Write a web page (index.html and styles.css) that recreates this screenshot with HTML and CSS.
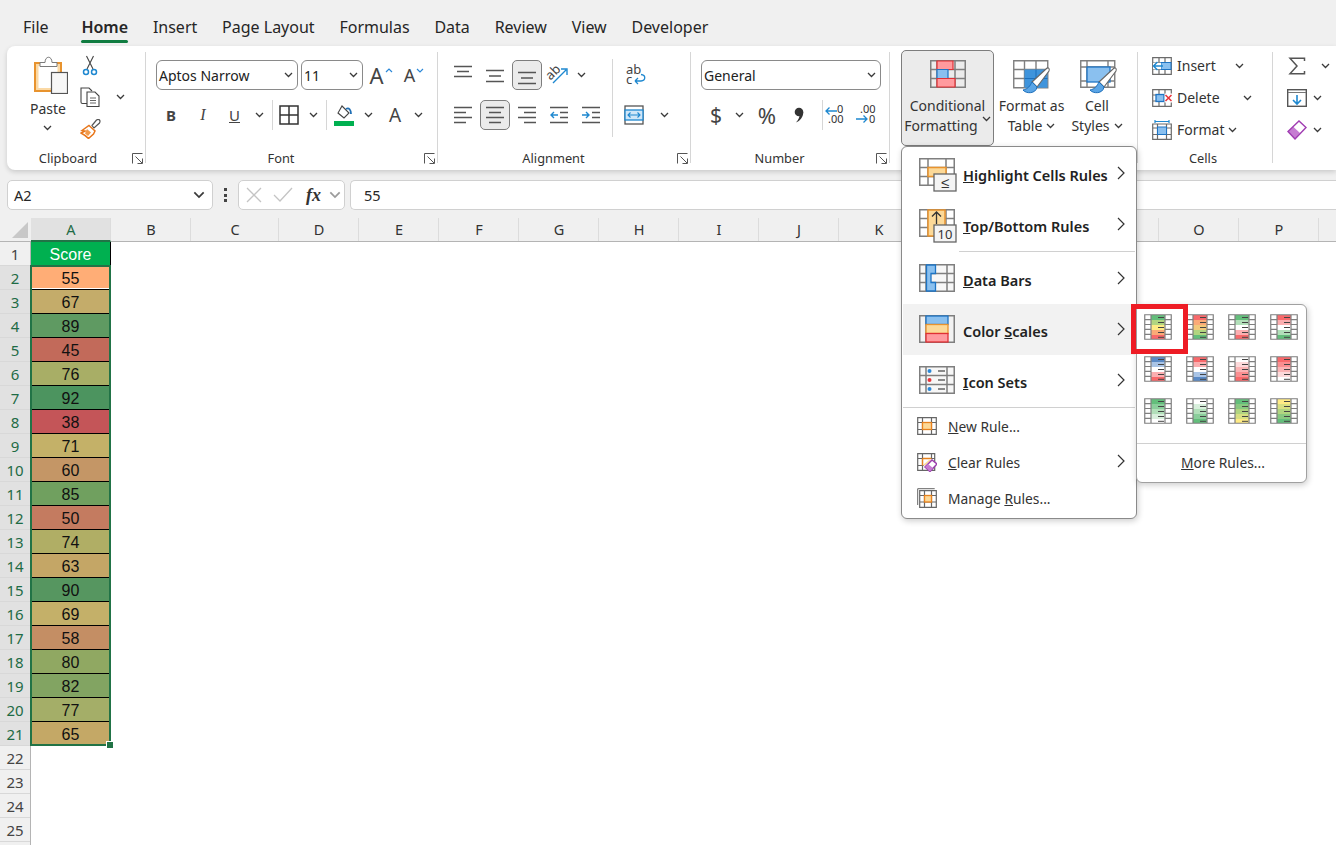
FILE: index.html
```html
<!DOCTYPE html>
<html lang="en">
<head>
<meta charset="utf-8">
<title>Excel - Color Scales</title>
<link rel="stylesheet" href="styles.css">
</head>
<body>
<svg class="defs" width="0" height="0">
  <symbol id="chev" viewBox="0 0 9 6"><path d="M1 1l3.5 3.5L8 1" fill="none" stroke="#3a3a3a" stroke-width="1.3"/></symbol>
  <symbol id="launch" viewBox="0 0 11 11"><path d="M.5 10.5V.5h10M3.5 3.5l6.5 6.5M10.5 5.5v5h-5" fill="none" stroke="#555" stroke-width="1"/></symbol>
  <symbol id="right" viewBox="0 0 8 14"><path d="M1 1l6 6-6 6" fill="none" stroke="#333" stroke-width="1.2"/></symbol>
  <symbol id="csgrid" viewBox="0 0 28 26"><path d="M.75.75h26.500v24.500H.75zM7 .75v24.500M21 .75v24.500M.75 5.600H7M21 5.600h6.250M.75 10.500H7M21 10.500h6.250M.75 15.400H7M21 15.400h6.250M.75 20.300H7M21 20.300h6.250" fill="none" stroke="#7f7f7f" stroke-width="1.200"/><path d="M14 3.500h6M14 8.500h6M14 13.500h6M14 18.500h6M14 23.300h6" stroke="#444" stroke-width="1"/></symbol>
</svg>
<div class="app">
  <nav class="tabs">
    <span class="tab file">File</span><span class="tab active">Home</span><span class="tab">Insert</span><span class="tab">Page Layout</span><span class="tab">Formulas</span><span class="tab">Data</span><span class="tab">Review</span><span class="tab">View</span><span class="tab">Developer</span>
  </nav>

  <section class="ribbon">
    <div class="group g-clip">
      <div class="body clip-body">
        <div class="paste">
          <svg width="34" height="38" viewBox="0 0 34 38"><rect x="1" y="7" width="26" height="28" fill="#fbd9a5" stroke="#e8932e" stroke-width="2"/><rect x="4.500" y="10" width="19" height="22" fill="#fff"/><path d="M6 10.500V6.500h5c0-7 7-7 7 0h5v4z" fill="#fff" stroke="#7a7a7a"/><rect x="17.500" y="16.500" width="16" height="21" fill="#f7f7f7" stroke="#555" stroke-width="1.200"/></svg>
          <span class="t paste-t">Paste</span>
          <svg class="chev chev-p"><use href="#chev"/></svg>
        </div>
        <div class="clip-small">
          <div class="cs-row"><svg width="16" height="21" viewBox="0 0 16 21"><path d="M4.500 1l6.500 13M11.500 1L5 14" stroke="#444" fill="none" stroke-width="1.100"/><circle cx="4" cy="17" r="2.500" fill="none" stroke="#1e88d0" stroke-width="1.500"/><circle cx="12" cy="17" r="2.500" fill="none" stroke="#1e88d0" stroke-width="1.500"/></svg></div>
          <div class="cs-row"><svg width="20" height="20" viewBox="0 0 20 20"><path d="M7 16.500H2.500q-1.500 0-1.500-1.500V1h8l3 3" fill="#fff" stroke="#444" stroke-width="1.100"/><path d="M7 5h8l4 4v10.500H7z" fill="#fff" stroke="#444" stroke-width="1.100"/><path d="M10 11h6M10 13.500h6M10 16h6" stroke="#666"/></svg><svg class="chev chev-c"><use href="#chev"/></svg></div>
          <div class="cs-row"><svg width="21" height="20" viewBox="0 0 21 20"><path d="M12 6.500l4.500-5.500q2-1.200 3 0t0 3L14 9z" fill="#fff" stroke="#555" stroke-width="1.200"/><path d="M9 6.500l6 5.500-1.500 3-5 4.500C6 17 3 15 1 14l4-2-3-.5z" fill="#fff" stroke="#e8761a" stroke-width="1.500"/><path d="M7 10l4 3.500-3 3.500-3-2.500z" fill="#f39a4a"/></svg></div>
        </div>
      </div>
      <footer class="foot has-launch"><span></span><span>Clipboard</span><svg class="launch"><use href="#launch"/></svg></footer>
    </div>
    <i class="vsep"></i>

    <div class="group g-font">
      <div class="body stack">
        <div class="row">
          <div class="combo w142"><span>Aptos Narrow</span><svg class="chev"><use href="#chev"/></svg></div>
          <div class="combo w62 ml3"><span>11</span><svg class="chev"><use href="#chev"/></svg></div>
          <div class="tb w36"><span class="bigA">A</span><svg class="caret" width="8" height="5" viewBox="0 0 8 5"><path d="M1 4l3-3 3 3" fill="none" stroke="#2b88d8" stroke-width="1.2"/></svg></div>
          <div class="tb w30"><span class="midA">A</span><svg class="caret" width="8" height="5" viewBox="0 0 8 5"><path d="M1 1l3 3 3-3" fill="none" stroke="#2b88d8" stroke-width="1.2"/></svg></div>
        </div>
        <div class="row">
          <div class="tb w30"><b class="fB">B</b></div>
          <div class="tb w30 ml2"><i class="fI">I</i></div>
          <div class="tb w31 ml1"><u class="fU">U</u></div>
          <div class="tb w18"><svg class="chev"><use href="#chev"/></svg></div>
          <i class="rs w8"></i>
          <div class="tb w26"><svg width="20" height="20" viewBox="0 0 20 20"><path d="M1 1h18v18H1zM10 1v18M1 10h18" fill="none" stroke="#333" stroke-width="1.500"/></svg></div>
          <div class="tb w22"><svg class="chev"><use href="#chev"/></svg></div>
          <i class="rs w4"></i>
          <div class="tb w32"><svg width="20" height="21" viewBox="0 0 20 21"><path d="M8 1l7 7-5 5-6-5z" fill="#fff" stroke="#444" stroke-width="1.100"/><path d="M12 4c3-2 5 1 5 5" fill="none" stroke="#1f6fb5" stroke-width="1.800"/><rect y="16" width="20" height="5" fill="#00b050"/></svg></div>
          <div class="tb w17"><svg class="chev"><use href="#chev"/></svg></div>
          <div class="tb w36"><span class="colA">A</span></div>
          <div class="tb w10"><svg class="chev"><use href="#chev"/></svg></div>
        </div>
      </div>
      <footer class="foot has-launch"><span></span><span>Font</span><svg class="launch"><use href="#launch"/></svg></footer>
    </div>
    <i class="vsep"></i>

    <div class="group g-align">
      <div class="body align-body">
        <div class="stack w164">
          <div class="row g2">
            <div class="tb w30"><svg width="18" height="22" viewBox="0 0 18 22"><path d="M0 2.500h18M3 7.500h12M0 12.500h18" stroke="#555" stroke-width="1.300"/></svg></div>
            <div class="tb w30"><svg width="18" height="22" viewBox="0 0 18 22"><path d="M0 6.500h18M3 12h12M0 17.500h18" stroke="#555" stroke-width="1.300"/></svg></div>
            <div class="tb w30 on"><svg width="18" height="22" viewBox="0 0 18 22"><path d="M0 8.500h18M3 14h12M0 19.500h18" stroke="#555" stroke-width="1.300"/></svg></div>
            <div class="tb w28"><svg class="vis" width="22" height="20" viewBox="0 0 22 20"><text x="0" y="13" class="svgt" transform="rotate(-45 5 10)">ab</text><path d="M6 18L19 5M14 4h6v6" fill="none" stroke="#1e88d0" stroke-width="1.400"/></svg></div>
            <div class="tb w14"><svg class="chev"><use href="#chev"/></svg></div>
          </div>
          <div class="row g2">
            <div class="tb w30"><svg width="18" height="18" viewBox="0 0 18 18"><path d="M0 1.500h18M0 6.500h12M0 11.500h18M0 16.500h12" stroke="#555" stroke-width="1.300"/></svg></div>
            <div class="tb w30 on"><svg width="18" height="18" viewBox="0 0 18 18"><path d="M0 1.500h18M3 6.500h12M0 11.500h18M3 16.500h12" stroke="#555" stroke-width="1.300"/></svg></div>
            <div class="tb w30"><svg width="18" height="18" viewBox="0 0 18 18"><path d="M0 1.500h18M6 6.500h12M0 11.500h18M6 16.500h12" stroke="#555" stroke-width="1.300"/></svg></div>
            <div class="tb w30"><svg width="18" height="18" viewBox="0 0 18 18"><path d="M0 1.500h18M10 6.500h8M10 11.500h8M0 16.500h18" stroke="#555" stroke-width="1.300"/><path d="M8 9H1M4 6L1 9l3 3" fill="none" stroke="#1e88d0" stroke-width="1.400"/></svg></div>
            <div class="tb w30"><svg width="18" height="18" viewBox="0 0 18 18"><path d="M0 1.500h18M10 6.500h8M10 11.500h8M0 16.500h18" stroke="#555" stroke-width="1.300"/><path d="M0 9h7M4 6l3 3-3 3" fill="none" stroke="#1e88d0" stroke-width="1.400"/></svg></div>
          </div>
        </div>
        <i class="rs-tall"></i>
        <div class="stack">
          <div class="row"><div class="tb w46"><svg class="vis" width="20" height="20" viewBox="0 0 20 20"><text x="0" y="9" class="svgt">ab</text><text x="0" y="19" class="svgt">c</text><path d="M9 16h6c5-.5 5-6 0-6.500M9 16l3-3M9 16l3 3" fill="none" stroke="#1e88d0" stroke-width="1.300"/></svg></div></div>
          <div class="row"><div class="tb w42"><svg width="20" height="20" viewBox="0 0 20 20"><rect x="1" y="1" width="18" height="18" fill="#fff" stroke="#555" stroke-width="1.300"/><rect x="1" y="5" width="18" height="10" fill="#cfe6f8" stroke="#1e88d0" stroke-width="1.300"/><path d="M4 10h12M6.500 7.500L4 10l2.500 2.500M13.500 7.500L16 10l-2.500 2.500" fill="none" stroke="#1e88d0" stroke-width="1.100"/></svg></div><div class="tb w18"><svg class="chev"><use href="#chev"/></svg></div></div>
        </div>
      </div>
      <footer class="foot has-launch"><span></span><span>Alignment</span><svg class="launch"><use href="#launch"/></svg></footer>
    </div>
    <i class="vsep"></i>

    <div class="group g-num">
      <div class="body stack">
        <div class="row"><div class="combo w180"><span>General</span><svg class="chev"><use href="#chev"/></svg></div></div>
        <div class="row">
          <div class="tb w30"><span class="nsym">$</span></div>
          <div class="tb w16"><svg class="chev"><use href="#chev"/></svg></div>
          <div class="tb w40"><span class="nsym pct">%</span></div>
          <div class="tb w24"><svg width="10" height="16" viewBox="0 0 10 16"><circle cx="5" cy="5" r="4.300" fill="#333"/><path d="M9.200 5C9.500 10 6 14 2 15.500 5 12 5.500 10 5.500 8z" fill="#333"/></svg></div>
          <i class="rs w12"></i>
          <div class="tb w23"><svg class="vis" width="20" height="20" viewBox="0 0 20 20"><text x="12" y="8" class="dec">0</text><text x="3" y="18" class="dec">.00</text><path d="M12 6H1M4.500 2.500L1 6l3.500 3.500" fill="none" stroke="#1e88d0" stroke-width="1.300"/></svg></div>
          <div class="tb w40"><svg class="vis" width="20" height="20" viewBox="0 0 20 20"><text x="4" y="8" class="dec">.00</text><text x="13" y="18" class="dec">0</text><path d="M0 14h11M7.500 10.500L11 14l-3.500 3.500" fill="none" stroke="#1e88d0" stroke-width="1.300"/></svg></div>
        </div>
      </div>
      <footer class="foot has-launch"><span></span><span>Number</span><svg class="launch"><use href="#launch"/></svg></footer>
    </div>
    <i class="vsep"></i>

    <div class="group g-styles">
      <div class="body big-body">
        <div class="bigbtn cf">
          <svg width="36" height="28" viewBox="0 0 36 28"><path d="M.75.75h34.500v26.500H.75zM7 .75v26.500M25 .75v26.500M.75 9.500h34.500M.75 18.500h34.500" fill="none" stroke="#7f7f7f" stroke-width="1.500"/><path d="M7 1h16v8.500H7z" fill="#ff9a9e" stroke="#e03035" stroke-width="1.200"/><path d="M7 9.500h11v9H7z" fill="#8ac0ef" stroke="#1e74c4" stroke-width="1.200"/><path d="M7 18.500h18v8.500H7z" fill="#ff9a9e" stroke="#e03035" stroke-width="1.200"/></svg>
          <span class="t bt">Conditional</span>
          <span class="t bt">Formatting<svg class="chev chev-i"><use href="#chev"/></svg></span>
        </div>
        <div class="bigbtn ft">
          <svg width="38" height="35" viewBox="0 0 38 35"><path d="M.75.75h34v27h-34zM11.500 .75v27M23 .75v27M.75 9.500h34M.75 18.500h34" fill="none" stroke="#7f7f7f" stroke-width="1.400"/><path d="M11.500 9.500h23v18.250h-23z" fill="#3f94dc"/><path d="M23 9.500v18M11.500 18.500h23" stroke="#1d6fbb"/><path d="M19 22L33 9c2-2 4-1 3 2L24 27z" fill="#fff" stroke="#666" stroke-width="1.100"/><path d="M19 22c-2 4-4 7-9 8 3 4 13 4 14-3z" fill="#5aa5e6" stroke="#1d6fbb"/></svg>
          <span class="t bt">Format as</span>
          <span class="t bt">Table<svg class="chev chev-i"><use href="#chev"/></svg></span>
        </div>
        <div class="bigbtn cst">
          <svg width="38" height="35" viewBox="0 0 38 35"><path d="M.75.75h34v26.500h-34zM7 .75v26.500M28 .75v26.500M.75 7h34M.75 21h34" fill="none" stroke="#7f7f7f" stroke-width="1.400"/><rect x="7" y="7" width="23" height="15" fill="#8ac0ef" stroke="#1e74c4" stroke-width="1.300"/><path d="M19 22L33 9c2-2 4-1 3 2L24 27z" fill="#fff" stroke="#666" stroke-width="1.100"/><path d="M19 22c-2 4-4 7-9 8 3 4 13 4 14-3z" fill="#5aa5e6" stroke="#1d6fbb"/></svg>
          <span class="t bt">Cell</span>
          <span class="t bt">Styles<svg class="chev chev-i"><use href="#chev"/></svg></span>
        </div>
      </div>
      <footer class="foot"><span></span><span></span><span></span></footer>
    </div>
    <i class="vsep"></i>

    <div class="group g-cells">
      <div class="body tri">
        <div class="tri-row"><svg width="20" height="18" viewBox="0 0 20 18"><path d="M.7.7h18.600v16.600H.7zM.7 6h18.600M.7 12h18.600M7 .7v16.600M13 .7v16.600" fill="none" stroke="#6b6b6b" stroke-width="1.200"/><rect x="9" y="5.500" width="10" height="7" fill="#8ac0ef" stroke="#1e74c4"/><rect x="1" y="6" width="8" height="6" fill="#fff"/><path d="M11 9H2M5.500 5L1.500 9l4 4" fill="none" stroke="#1e88d0" stroke-width="1.500"/></svg><span class="t w58">Insert</span><svg class="chev"><use href="#chev"/></svg></div>
        <div class="tri-row"><svg width="20" height="18" viewBox="0 0 20 18"><path d="M.7.7h18.600v16.600H.7zM.7 6h18.600M.7 12h18.600M7 .7v16.600M13 .7v16.600" fill="none" stroke="#6b6b6b" stroke-width="1.200"/><rect x="4" y="5.500" width="8" height="7" fill="#8ac0ef" stroke="#1e74c4" stroke-width="1.300"/><rect x="12.500" y="4.500" width="7.500" height="9" fill="#fff"/><path d="M13.500 6l6 6M19.500 6l-6 6" stroke="#e8333a" stroke-width="1.500"/></svg><span class="t w66">Delete</span><svg class="chev"><use href="#chev"/></svg></div>
        <div class="tri-row"><svg width="20" height="20" viewBox="0 0 20 20"><path d="M.7 4h18.600v15.300H.7zM.7 8h18.600M.7 14.500h18.600M5.500 4v15.300M14.500 4v15.300" fill="none" stroke="#6b6b6b" stroke-width="1.200"/><rect x="5.500" y="7" width="9" height="7.500" fill="#8ac0ef" stroke="#1e74c4"/><path d="M3 1.500h14M3 0v3M17 0v3" stroke="#1e88d0" stroke-width="1.200"/></svg><span class="t w51">Format</span><svg class="chev"><use href="#chev"/></svg></div>
      </div>
      <footer class="foot"><span></span><span>Cells</span><span></span></footer>
    </div>
    <i class="vsep"></i>

    <div class="group g-edit">
      <div class="body tri">
        <div class="tri-row"><svg class="ed sigma" width="20" height="18" viewBox="-2 0 20 18"><path d="M15.500 4V1.200H1l7 7.800-7 7.800h14.500V14" fill="none" stroke="#555" stroke-width="1.500"/></svg><svg class="chev"><use href="#chev"/></svg></div>
        <div class="tri-row"><svg class="ed" width="20" height="18" viewBox="0 0 20 18"><rect x=".7" y=".7" width="18.600" height="16.600" fill="#fff" stroke="#555" stroke-width="1.400"/><path d="M1 3.500h18" stroke="#777"/><path d="M10 6v9M6 11l4 4 4-4" fill="none" stroke="#1e88d0" stroke-width="1.600"/></svg><svg class="chev"><use href="#chev"/></svg></div>
        <div class="tri-row"><svg class="ed" width="20" height="20" viewBox="0 0 20 20"><path d="M1 11.500L12 1l7 6.500L8 19z" fill="#fff"/><path d="M1 11.500l5-5 7 6.500-5 6z" fill="#c67cd2"/><path d="M1 11.500L12 1l7 6.500L8 19z" fill="none" stroke="#a03cb2" stroke-width="1.400"/></svg><svg class="chev"><use href="#chev"/></svg></div>
      </div>
      <footer class="foot"><span></span><span></span><span></span></footer>
    </div>
  </section>

  <section class="fbar">
    <div class="namebox"><span>A2</span><svg class="chev chev-w"><use href="#chev"/></svg></div>
    <div class="dots"><i></i><i></i><i></i></div>
    <div class="fxbox">
      <svg width="16" height="16" viewBox="0 0 16 16"><path d="M1 1l14 14M15 1L1 15" stroke="#c4c4c4" stroke-width="1.300"/></svg>
      <svg width="20" height="16" viewBox="0 0 20 16"><path d="M1 8l6 6L19 1" fill="none" stroke="#c4c4c4" stroke-width="1.300"/></svg>
      <span class="fx">fx</span>
      <svg class="chev chev-l"><use href="#chev"/></svg>
    </div>
    <div class="formula">55</div>
  </section>

  <section class="sheet">
    <div class="colhdr">
      <div class="corner"><svg width="16" height="16" viewBox="0 0 16 16"><path d="M16 0v16H0z" fill="#c8c8c8"/></svg></div>
      <div class="ch sel">A</div><div class="ch">B</div><div class="ch wide">C</div><div class="ch">D</div><div class="ch">E</div><div class="ch">F</div><div class="ch">G</div><div class="ch">H</div><div class="ch">I</div><div class="ch">J</div><div class="ch">K</div><div class="ch">L</div><div class="ch">M</div><div class="ch">N</div><div class="ch">O</div><div class="ch">P</div><div class="ch">Q</div>
    </div>
    <div class="gridwrap">
      <div class="rowhdr">
        <div class="rh">1</div><div class="rh sel">2</div><div class="rh sel">3</div><div class="rh sel">4</div><div class="rh sel">5</div><div class="rh sel">6</div><div class="rh sel">7</div><div class="rh sel">8</div><div class="rh sel">9</div><div class="rh sel">10</div><div class="rh sel">11</div><div class="rh sel">12</div><div class="rh sel">13</div><div class="rh sel">14</div><div class="rh sel">15</div><div class="rh sel">16</div><div class="rh sel">17</div><div class="rh sel">18</div><div class="rh sel">19</div><div class="rh sel">20</div><div class="rh sel">21</div><div class="rh">22</div><div class="rh">23</div><div class="rh">24</div><div class="rh">25</div><div class="rh">26</div>
      </div>
      <div class="cola">
        <div class="cell head">Score</div>
        <div class="cell active" style="background:#ffad76">55</div>
        <div class="cell" style="background:#c4ac6a">67</div>
        <div class="cell" style="background:#5f9a62">89</div>
        <div class="cell" style="background:#c26a5a">45</div>
        <div class="cell" style="background:#a8ae66">76</div>
        <div class="cell" style="background:#4c945f">92</div>
        <div class="cell" style="background:#c45558">38</div>
        <div class="cell" style="background:#c4b168">71</div>
        <div class="cell" style="background:#c49666">60</div>
        <div class="cell" style="background:#70a05f">85</div>
        <div class="cell" style="background:#c47b60">50</div>
        <div class="cell" style="background:#b0ae65">74</div>
        <div class="cell" style="background:#c4a666">63</div>
        <div class="cell" style="background:#569660">90</div>
        <div class="cell" style="background:#c4b069">69</div>
        <div class="cell" style="background:#c48e64">58</div>
        <div class="cell" style="background:#90a862">80</div>
        <div class="cell" style="background:#82a462">82</div>
        <div class="cell" style="background:#a4ae68">77</div>
        <div class="cell last" style="background:#c4a866">65</div>
        <div class="selbox"><i class="handle"></i></div>
      </div>
    </div>
  </section>

  <div class="menu">
    <div class="mi"><svg class="mico vis" width="38" height="34" viewBox="0 0 38 34"><path d="M.75.75h34.500v26.500H.75zM9 .75v26.500M27 .75v26.500M.75 9.500h34.500M.75 18.500h34.500" fill="none" stroke="#7f7f7f" stroke-width="1.500"/><path d="M9 9.500h18v9H9z" fill="#fcd998" stroke="#e8932e" stroke-width="1.500"/><rect x="15" y="16" width="22" height="17" fill="#f4f4f4" stroke="#666" stroke-width="1.300"/><text x="26" y="30" class="svgk">≤</text></svg><span class="ml"><u>H</u>ighlight Cells Rules</span><svg class="rgt"><use href="#right"/></svg></div>
    <div class="mi"><svg class="mico vis" width="38" height="34" viewBox="0 0 38 34"><path d="M.75.75h34.500v26.500H.75zM.75 9.500h34.500M.75 18.500h34.500M9 .75v26.500M27 .75v26.500" fill="none" stroke="#7f7f7f" stroke-width="1.500"/><path d="M9 1h17v26H9z" fill="#fcd998" stroke="#e8932e" stroke-width="1.500"/><path d="M17.500 15V3M13 7.500L17.500 3 22 7.500" fill="none" stroke="#333" stroke-width="1.300"/><rect x="15" y="16" width="22" height="17" fill="#f4f4f4" stroke="#666" stroke-width="1.300"/><text x="26" y="30" class="svgk ten">10</text></svg><span class="ml"><u>T</u>op/Bottom Rules</span><svg class="rgt"><use href="#right"/></svg></div>
    <div class="msep short"></div>
    <div class="mi"><svg class="mico" width="36" height="28" viewBox="0 0 36 28"><path d="M.75.75h34.500v26.500H.75z" fill="#f7f7f7" stroke="#7f7f7f" stroke-width="1.500"/><path d="M7 .75v26.500M28 .75v26.500M.75 9.500h34.500M.75 18.500h34.500" fill="none" stroke="#7f7f7f" stroke-width="1.500"/><path d="M7.500 1h9v8.500h-4.500v9h4.500v8.500h-9z" fill="#8ac0ef" stroke="#1e74c4" stroke-width="1.300"/></svg><span class="ml"><u>D</u>ata Bars</span><svg class="rgt"><use href="#right"/></svg></div>
    <div class="mi hover"><svg class="mico" width="36" height="28" viewBox="0 0 36 28"><path d="M.75.75h34.500v26.500H.75zM7 .75v26.500M28 .75v26.500" fill="none" stroke="#7f7f7f" stroke-width="1.500"/><rect x="7" y="1" width="22" height="8.500" fill="#8ac0ef" stroke="#1e74c4" stroke-width="1.300"/><rect x="7" y="9.500" width="22" height="9" fill="#fcd998" stroke="#e8932e" stroke-width="1.300"/><rect x="7" y="18.500" width="22" height="8.500" fill="#ff9a9e" stroke="#e03035" stroke-width="1.300"/></svg><span class="ml">Color <u>S</u>cales</span><svg class="rgt"><use href="#right"/></svg></div>
    <div class="mi"><svg class="mico" width="36" height="28" viewBox="0 0 36 28"><path d="M.75.75h34.500v26.500H.75z" fill="#f7f7f7" stroke="#7f7f7f" stroke-width="1.500"/><path d="M7 .75v26.500M28 .75v26.500M.75 9.500h34.500M.75 18.500h34.500" fill="none" stroke="#7f7f7f" stroke-width="1.500"/><circle cx="10.500" cy="5" r="2" fill="#2b88d8"/><circle cx="10.500" cy="14" r="2" fill="#e8333a"/><circle cx="10.500" cy="23" r="2" fill="#2b88d8"/><path d="M19 5h7M19 14h7M19 23h7" stroke="#666" stroke-width="1.300"/></svg><span class="ml"><u>I</u>con Sets</span><svg class="rgt"><use href="#right"/></svg></div>
    <div class="msep"></div>
    <div class="ms"><svg width="20" height="18" viewBox="0 0 20 18"><path d="M.7.7h18.600v16.600H.7zM.7 5.500h18.600M.7 12.500h18.600M5.500 .7v16.600M14.500 .7v16.600" fill="none" stroke="#666" stroke-width="1.200"/><rect x="5.500" y="5.500" width="9" height="7" fill="#fcd998" stroke="#e8821e" stroke-width="1.300"/></svg><span><u>N</u>ew Rule...</span></div>
    <div class="ms"><svg width="20" height="19" viewBox="0 0 20 19"><path d="M.7.7h17v16.600H.7zM.7 5.500h17M.7 12.500h6M5.500 .7v16.600M14.500 .7v5" fill="none" stroke="#666" stroke-width="1.200"/><path d="M5.500 5.500h9M5.500 5.500v7" fill="none" stroke="#e8821e" stroke-width="1.300"/><path d="M6 12l6-5h2l-6 5.500z" fill="#fcd998"/><path d="M8 14l7-7 5 4-7 7.500z" fill="#fff" stroke="#9c3cae" stroke-width="1.500"/><path d="M8 14l3-3 5 4-3 3.500z" fill="#c67cd2"/></svg><span><u>C</u>lear Rules</span><svg class="rgt"><use href="#right"/></svg></div>
    <div class="ms"><svg width="20" height="20" viewBox="0 0 20 20"><path d="M.7 17V.7h17" fill="none" stroke="#666"/><path d="M2.700 2.700h16.600v16.600H2.700zM2.700 7.500h16.600M2.700 14h16.600M7.500 2.700v16.600M14.500 2.700v16.600" fill="none" stroke="#666" stroke-width="1.200"/><rect x="7.500" y="7.500" width="7" height="6.500" fill="#fcd998" stroke="#e8821e" stroke-width="1.300"/></svg><span>Manage <u>R</u>ules...</span></div>
  </div>

  <div class="submenu">
    <div class="csgrid">
      <svg class="csi" viewBox="0 0 28 26"><rect x="7" y="1" width="14" height="5" fill="#63be7b"/><rect x="7" y="6" width="14" height="5" fill="#b1d580"/><rect x="7" y="11" width="14" height="5" fill="#ffeb84"/><rect x="7" y="16" width="14" height="5" fill="#fbaa77"/><rect x="7" y="21" width="14" height="4" fill="#f8696b"/><use href="#csgrid"/></svg>
      <svg class="csi" viewBox="0 0 28 26"><rect x="7" y="1" width="14" height="5" fill="#f8696b"/><rect x="7" y="6" width="14" height="5" fill="#fbaa77"/><rect x="7" y="11" width="14" height="5" fill="#f2c97a"/><rect x="7" y="16" width="14" height="5" fill="#b1d580"/><rect x="7" y="21" width="14" height="4" fill="#63be7b"/><use href="#csgrid"/></svg>
      <svg class="csi" viewBox="0 0 28 26"><rect x="7" y="1" width="14" height="5" fill="#63be7b"/><rect x="7" y="6" width="14" height="5" fill="#b1dfb9"/><rect x="7" y="11" width="14" height="5" fill="#fff"/><rect x="7" y="16" width="14" height="5" fill="#fbaeb0"/><rect x="7" y="21" width="14" height="4" fill="#f8696b"/><use href="#csgrid"/></svg>
      <svg class="csi" viewBox="0 0 28 26"><rect x="7" y="1" width="14" height="5" fill="#f8696b"/><rect x="7" y="6" width="14" height="5" fill="#fbaeb0"/><rect x="7" y="11" width="14" height="5" fill="#fff"/><rect x="7" y="16" width="14" height="5" fill="#b1dfb9"/><rect x="7" y="21" width="14" height="4" fill="#63be7b"/><use href="#csgrid"/></svg>
      <svg class="csi" viewBox="0 0 28 26"><rect x="7" y="1" width="14" height="5" fill="#5a8ac6"/><rect x="7" y="6" width="14" height="5" fill="#a9c4e6"/><rect x="7" y="11" width="14" height="5" fill="#fff"/><rect x="7" y="16" width="14" height="5" fill="#fbaeb0"/><rect x="7" y="21" width="14" height="4" fill="#f8696b"/><use href="#csgrid"/></svg>
      <svg class="csi" viewBox="0 0 28 26"><rect x="7" y="1" width="14" height="5" fill="#f8696b"/><rect x="7" y="6" width="14" height="5" fill="#fbaeb0"/><rect x="7" y="11" width="14" height="5" fill="#fff"/><rect x="7" y="16" width="14" height="5" fill="#a9c4e6"/><rect x="7" y="21" width="14" height="4" fill="#5a8ac6"/><use href="#csgrid"/></svg>
      <svg class="csi" viewBox="0 0 28 26"><rect x="7" y="1" width="14" height="5" fill="#fff"/><rect x="7" y="6" width="14" height="5" fill="#fdd9da"/><rect x="7" y="11" width="14" height="5" fill="#fbb4b5"/><rect x="7" y="16" width="14" height="5" fill="#fa8e90"/><rect x="7" y="21" width="14" height="4" fill="#f8696b"/><use href="#csgrid"/></svg>
      <svg class="csi" viewBox="0 0 28 26"><rect x="7" y="1" width="14" height="5" fill="#f8696b"/><rect x="7" y="6" width="14" height="5" fill="#fa8e90"/><rect x="7" y="11" width="14" height="5" fill="#fbb4b5"/><rect x="7" y="16" width="14" height="5" fill="#fdd9da"/><rect x="7" y="21" width="14" height="4" fill="#fff"/><use href="#csgrid"/></svg>
      <svg class="csi" viewBox="0 0 28 26"><rect x="7" y="1" width="14" height="5" fill="#63be7b"/><rect x="7" y="6" width="14" height="5" fill="#8ace9b"/><rect x="7" y="11" width="14" height="5" fill="#b1dfb9"/><rect x="7" y="16" width="14" height="5" fill="#d8efdc"/><rect x="7" y="21" width="14" height="4" fill="#fff"/><use href="#csgrid"/></svg>
      <svg class="csi" viewBox="0 0 28 26"><rect x="7" y="1" width="14" height="5" fill="#fff"/><rect x="7" y="6" width="14" height="5" fill="#d8efdc"/><rect x="7" y="11" width="14" height="5" fill="#b1dfb9"/><rect x="7" y="16" width="14" height="5" fill="#8ace9b"/><rect x="7" y="21" width="14" height="4" fill="#63be7b"/><use href="#csgrid"/></svg>
      <svg class="csi" viewBox="0 0 28 26"><rect x="7" y="1" width="14" height="5" fill="#63be7b"/><rect x="7" y="6" width="14" height="5" fill="#89c880"/><rect x="7" y="11" width="14" height="5" fill="#b1d580"/><rect x="7" y="16" width="14" height="5" fill="#d8e082"/><rect x="7" y="21" width="14" height="4" fill="#ffeb84"/><use href="#csgrid"/></svg>
      <svg class="csi" viewBox="0 0 28 26"><rect x="7" y="1" width="14" height="5" fill="#ffeb84"/><rect x="7" y="6" width="14" height="5" fill="#d8e082"/><rect x="7" y="11" width="14" height="5" fill="#b1d580"/><rect x="7" y="16" width="14" height="5" fill="#89c880"/><rect x="7" y="21" width="14" height="4" fill="#63be7b"/><use href="#csgrid"/></svg>
    </div>
    <div class="subsep"></div>
    <div class="more"><u>M</u>ore Rules...</div>
    <div class="redbox"></div>
  </div>
</div>
</body>
</html>
```
FILE: styles.css
```css
* { box-sizing: border-box; }
html, body { margin: 0; padding: 0; }
body { background: #f0f0f0; font-family: "Noto Sans", "Open Sans", sans-serif; color: #262626; }
.defs { position: absolute; }
.vis { overflow: visible; }
.app { width: 1336px; height: 845px; overflow: hidden; position: relative; background: #f0f0f0; }

.tabs { height: 46px; display: flex; align-items: center; padding-left: 23px; gap: 24.8px; font-size: 16px; padding-top: 8px; }
.tab { position: relative; line-height: 24px; }
.tab.file { margin-right: 8px; }
.tab.active { font-weight: 600; }
.tab.active::after { content: ""; position: absolute; left: 0; right: 0; top: 25px; height: 3px; background: #107c41; border-radius: 2px; }

.ribbon { margin-left: 7px; height: 124px; background: #fff; display: flex; border-radius: 8px 0 0 8px; box-shadow: 0 2px 5px rgba(0,0,0,.16); }
.group { display: flex; flex-direction: column; height: 124px; flex: none; }
.vsep { width: 1px; height: 111px; margin-top: 6px; background: #d6d6d6; flex: none; }
.g-clip { width: 138px; }
.g-font { width: 291px; }
.g-align { width: 252px; }
.g-num { width: 198px; }
.g-styles { width: 247px; }
.g-cells { width: 134px; }
.g-edit { flex: 1; min-width: 0; }
.body { flex: 1; min-height: 0; }
.foot { height: 22px; padding: 0 4px 2px 0; display: grid; grid-template-columns: 1fr auto 1fr; align-items: center; font-size: 12.8px; line-height: 18px; color: #333; }
.foot.has-launch { padding-right: 21px; }
.g-clip .foot.has-launch { padding-right: 16px; }
.launch { width: 11px; height: 11px; justify-self: end; margin-right: -19px; }
.g-clip .launch { margin-right: -14px; }

.t { font-size: 14px; line-height: 20px; color: #333; }
.row { display: flex; align-items: center; height: 30px; }
.stack { display: flex; flex-direction: column; gap: 10px; padding-top: 14px; }
.g-font .stack, .g-num .stack { padding-left: 10px; }
.tb { display: flex; align-items: center; justify-content: center; height: 30px; flex: none; position: relative; }
.on { background: #ebebeb; border: 1px solid #7d7d7d; border-radius: 5px; }
.chev { width: 9px; height: 6px; flex: none; }
.rs { flex: none; height: 30px; display: block; position: relative; }
.rs::after { content: ""; position: absolute; left: 50%; top: 0; height: 30px; width: 1px; background: #d6d6d6; }
.rs.w12::after { left: 11px; }

.w4 { width: 4px; } .w8 { width: 8px; } .w10 { width: 10px; } .w12 { width: 12px; } .w14 { width: 14px; } .w16 { width: 16px; } .w17 { width: 17px; } .w18 { width: 18px; }
.w22 { width: 22px; } .w23 { width: 23px; } .w24 { width: 24px; } .w26 { width: 26px; } .w28 { width: 28px; } .w30 { width: 30px; } .w31 { width: 31px; } .w32 { width: 32px; } .w36 { width: 36px; }
.w40 { width: 40px; } .w42 { width: 42px; } .w46 { width: 46px; } .w51 { width: 51px; } .w58 { width: 58px; } .w62 { width: 62px; } .w66 { width: 66px; }
.w142 { width: 142px; } .w164 { width: 164px; } .w180 { width: 180px; }
.ml1 { margin-left: 1px; } .ml2 { margin-left: 2px; } .ml3 { margin-left: 3px; }
.g2 { gap: 2px; }

.combo { height: 30px; border: 1px solid #8a8a8a; border-radius: 6px; display: flex; align-items: center; justify-content: space-between; padding: 0 4px 0 2px; font-size: 14px; color: #222; flex: none; background: #fff; }

.clip-body { display: flex; }
.paste { width: 50px; margin-left: 20px; padding-top: 10px; display: flex; flex-direction: column; align-items: flex-start; }
.paste svg:first-child { margin-left: 7px; }
.paste-t { width: 42px; text-align: center; margin-top: 5px; }
.chev-p { margin: 6px 0 0 16px; }
.clip-small { margin-left: 3px; padding-top: 3px; }
.cs-row { height: 32px; width: 60px; display: flex; align-items: center; position: relative; }
.cs-row:first-child svg { margin-left: 2px; }
.chev-c { margin-left: 16px; }

.bigA { font-size: 22px; font-weight: 400; color: #444; line-height: 30px; }
.midA { font-size: 18px; color: #444; line-height: 30px; }
.caret { margin: -10px 0 0 1px; }
.fB { font-size: 15px; font-weight: 700; color: #444; }
.fI { font-size: 16px; font-style: italic; color: #444; font-family: "Liberation Serif", serif; }
.fU { font-size: 15px; color: #444; }
.colA { font-size: 19px; color: #444; }

.align-body { display: flex; padding-left: 10px; }
.rs-tall { width: 1px; height: 78px; margin-top: 13px; background: #d6d6d6; flex: none; }
.svgt { font: 13px "Noto Sans", sans-serif; fill: #444; }
.dec { font: 11px "Noto Sans", sans-serif; fill: #333; }
.svgk { font: 15px "Noto Sans", sans-serif; fill: #333; text-anchor: middle; }
.svgk.ten { font-size: 13px; }
.nsym { font-size: 21px; color: #444; line-height: 30px; }
.pct { font-size: 22px; }

.big-body { display: flex; padding: 4px 0 0 11px; }
.bigbtn { display: flex; flex-direction: column; align-items: center; border: 1px solid transparent; border-radius: 5px; height: 96px; padding-top: 9px; flex: none; }
.bt { line-height: 20px; white-space: nowrap; }
.cf { width: 93px; background: #ebebeb; border-color: #7d7d7d; }
.cf svg:first-child { margin-bottom: 8px; }
.ft { width: 75px; }
.cst { width: 56px; }
.ft svg:first-child, .cst svg:first-child { margin-bottom: 1px; }
.cst svg:first-child { margin-left: 4px; }
.chev-i { margin-left: 4px; vertical-align: 1px; }

.tri { padding: 4px 0 0 14px; }
.tri-row { display: flex; align-items: center; height: 32px; }
.tri-row > svg:first-child { width: 20px; margin-right: 5px; }
.tri-row > svg.ed { margin-right: 6px; }
.tri-row > svg.sigma { margin-right: 14px; }

.fbar { height: 30px; margin-top: 10px; display: flex; align-items: stretch; }
.namebox { width: 206px; margin-left: 7px; background: #fff; border: 1px solid #d0d0d0; border-radius: 5px; display: flex; align-items: center; justify-content: space-between; padding: 0 7px 0 6px; font-size: 14.5px; }
.chev-w { width: 12px; height: 8px; }
.dots { width: 25px; display: flex; flex-direction: column; align-items: center; justify-content: center; gap: 2.5px; }
.dots i { width: 3px; height: 3px; background: #444; display: block; }
.fxbox { width: 107px; background: #fff; border: 1px solid #d0d0d0; border-radius: 5px; display: flex; align-items: center; gap: 11px; padding-left: 7px; }
.fx { font: italic 700 18px "Liberation Serif", serif; color: #333; margin-left: 2px; }
.chev-l { width: 12px; height: 8px; margin-left: -3px; opacity: .5; }
.formula { flex: 1; margin-left: 5px; background: #fff; border: 1px solid #d0d0d0; border-right: 0; border-radius: 5px 0 0 5px; display: flex; align-items: center; padding-left: 13px; font-size: 14.5px; }

.sheet { margin-top: 8px; }
.colhdr { display: flex; height: 24px; border-bottom: 1px solid #b4b4b4; background: #f0f0f0; }
.corner { width: 31px; flex: none; background: #f0f0f0; display: flex; align-items: flex-end; justify-content: flex-end; padding: 0 3px 3px 0; }
.ch { width: 80px; flex: none; text-align: center; font-size: 14.5px; line-height: 23px; padding-left: 1px; color: #333; border-right: 1px solid #dcdcdc; }
.ch.wide { width: 88px; }
.ch.sel { background: #e1e1e1; color: #1e6b45; border-bottom: 2px solid #217346; height: 24px; }
.gridwrap { display: flex; background: #fff; }
.rowhdr { width: 31px; flex: none; border-right: 1px solid #b4b4b4; background: #f0f0f0; }
.rh { height: 24px; text-align: center; font-size: 15px; line-height: 23px; padding-top: 1px; color: #444; border-bottom: 1px solid #d8d8d8; }
.rh.sel { background: #e1e1e1; color: #1e6b45; }
.cola { width: 80px; position: relative; }
.cell { height: 24px; width: 80px; text-align: center; font: 16px/23px "Liberation Sans", sans-serif; padding-top: 1px; color: #111; border-bottom: 1px solid #000; border-right: 1px solid #000; }
.cell.head { background: #00b050; color: #fff; }
.cell.active { box-shadow: inset 0 0 0 1px #fff; }
.selbox { position: absolute; left: -1px; top: 23px; width: 81px; height: 481px; border: 2px solid #217346; pointer-events: none; }
.handle { position: absolute; right: -4px; bottom: -4px; width: 6px; height: 6px; background: #217346; outline: 1px solid #fff; display: block; }

.menu { position: absolute; left: 901px; top: 146px; width: 236px; height: 373px; background: #fff; border: 1px solid #8a8a8a; border-radius: 6px; padding: 1px; box-shadow: 1px 2px 6px rgba(0,0,0,.2); z-index: 5; }
.mi { height: 51px; display: flex; align-items: center; padding-left: 16px; position: relative; font-size: 14.5px; font-weight: 600; color: #222; }
.mi.hover { background: #f2f2f2; }
.ml { position: absolute; left: 60px; top: 16px; line-height: 22px; }
.mi .mico { align-self: flex-start; margin-top: 11px; }
.mi:nth-child(1) .mico, .mi:nth-child(2) .mico { margin-top: 10px; }
.rgt { width: 8px; height: 14px; position: absolute; right: 10px; top: 18px; }
.msep { height: 1px; background: #d0d0d0; margin: 1px 0; }
.msep.short { margin-left: 56px; }
.ms { height: 36px; display: flex; align-items: center; padding: 0 0 2px 14px; gap: 11px; font-size: 13.8px; color: #333; position: relative; }
.ms svg:first-child { width: 20px; }
.ms .rgt { top: 9px; }

.submenu { position: absolute; left: 1136px; top: 304px; width: 171px; height: 179px; background: #fff; border: 1px solid #a0a0a0; border-radius: 6px; box-shadow: 1px 2px 6px rgba(0,0,0,.2); z-index: 6; padding: 9px 0 0 7px; }
.csgrid { display: grid; grid-template-columns: repeat(4, 28px); grid-auto-rows: 26px; column-gap: 14px; row-gap: 16px; }
.csi { width: 28px; height: 26px; display: block; }
.subsep { height: 1px; background: #d0d0d0; margin: 19px 0 0 -7px; }
.more { text-align: center; font-size: 13.8px; line-height: 20px; margin-top: 9px; color: #333; margin-left: -4px; }
.redbox { position: absolute; left: -6px; top: -1px; width: 57px; height: 50px; border: 5px solid #ee1c25; }
```
